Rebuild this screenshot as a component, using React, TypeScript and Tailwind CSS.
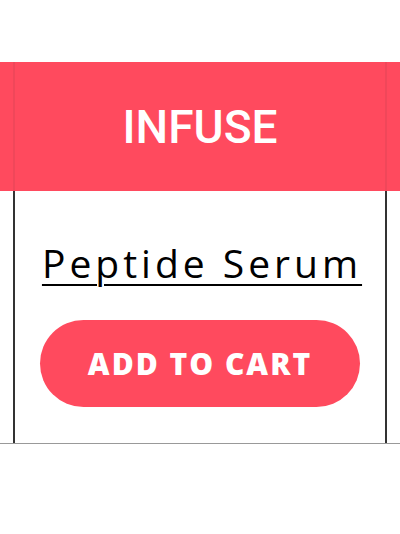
export default function App() {
  return (
    <div className="w-[400px] h-[534px] bg-white" style={{ fontFamily: "Inter, 'Liberation Sans', sans-serif" }}>
      <div className="h-[62px]" />
      <div className="border-b border-[#999999]">
        <div className="flex h-[129px] bg-[#ff4a5e]">
          <div className="w-[13px]" />
          <div className="flex-1 flex items-center justify-center border-x-2 border-[#f0475a]">
            <h1 className="text-[46px] font-medium text-white leading-none" style={{ fontFamily: "Roboto, sans-serif" }}>
              INFUSE
            </h1>
          </div>
          <div className="w-[13px]" />
        </div>
        <div className="mx-[13px] h-[252px] border-x-2 border-[#333333] flex flex-col items-center pt-[48px]">
          <a href="#" className="pl-[4px] text-[39px] leading-[48px] tracking-[4px] text-black underline underline-offset-[6px] decoration-2" style={{ fontFamily: "'Open Sans', sans-serif" }}>
            Peptide Serum
          </a>
          <button className="mt-[33px] w-[320px] h-[87px] rounded-full bg-[#ff4a5e] text-white text-[30px] font-extrabold tracking-[2px]" style={{ fontFamily: "'Open Sans', sans-serif" }}>
            ADD TO CART
          </button>
        </div>
      </div>
    </div>
  )
}
